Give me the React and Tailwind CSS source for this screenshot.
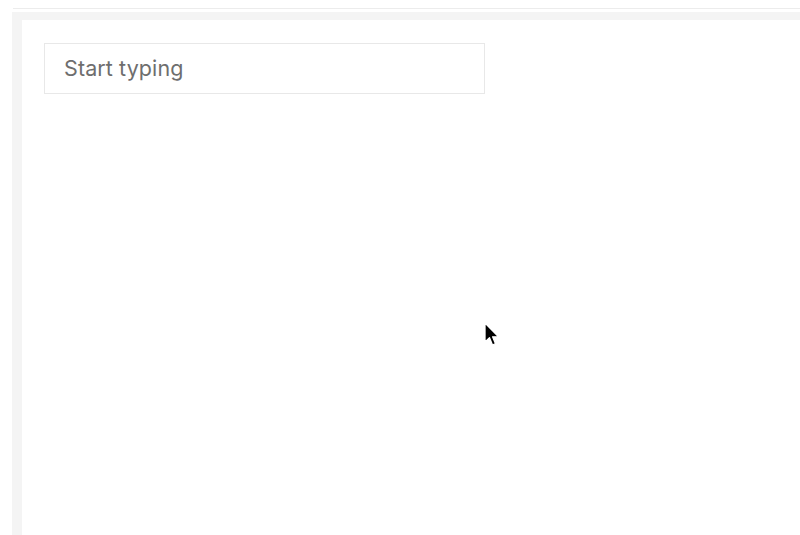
export default function App() {
  return (
    <div className="relative h-[535px] w-[800px] overflow-hidden bg-white font-['Inter',sans-serif]">
      <div className="pt-2 pl-[13px]">
        <div className="h-px bg-[#ececec]" />
      </div>
      <div className="mt-[3px] ml-[12px] h-[540px] border-t-[8px] border-l-[10px] border-[#f4f4f4] pl-[22px] pt-[23px]">
        <div className="flex h-[51px] w-[441px] items-center border border-[#e8e8e8] bg-white pl-[19px]">
          <span className="text-[21.5px] tracking-[0.1px] text-[#6e6e6e]">Start typing</span>
        </div>
      </div>
      {/* mouse pointer */}
      <svg
        className="absolute left-[483px] top-[322px]"
        width="18"
        height="26"
        viewBox="0 0 18 26"
      >
        <path
          d="M2 1 L2 20 L6.5 15.8 L9.5 23 L12.5 21.7 L9.6 14.8 L15.5 14.8 Z"
          fill="#000"
          stroke="#fff"
          strokeWidth="1.3"
          strokeLinejoin="round"
        />
      </svg>
    </div>
  );
}
